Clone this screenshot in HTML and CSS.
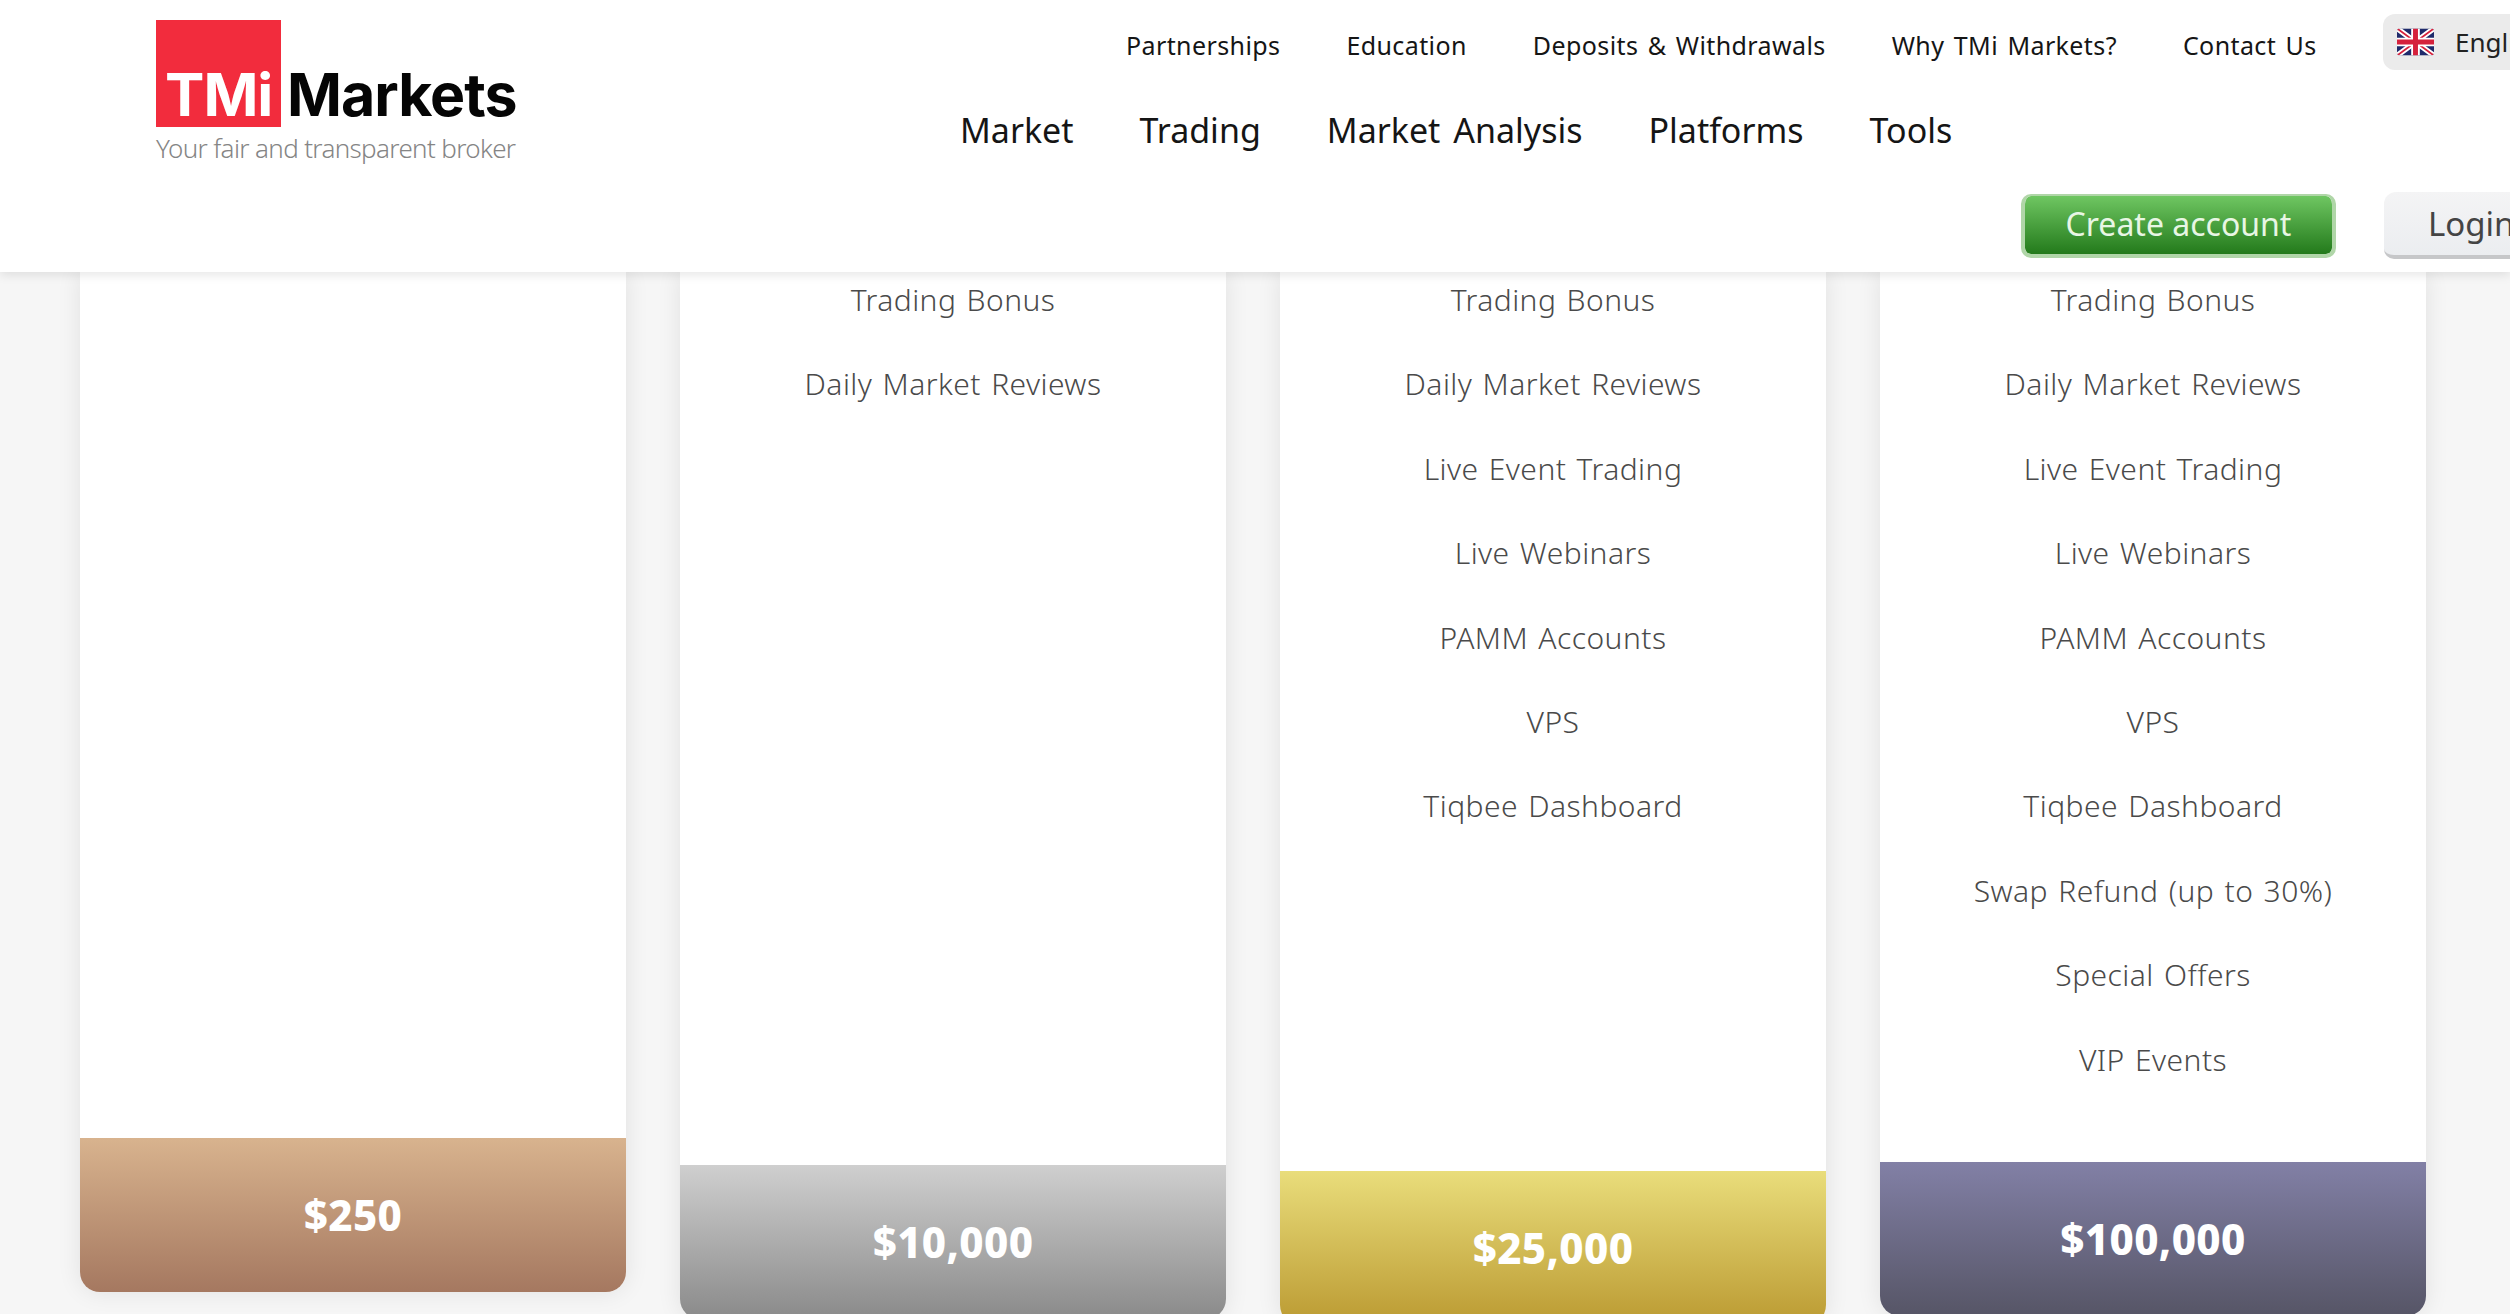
FILE: index.html
```html
<!DOCTYPE html>
<html lang="en">
<head>
<meta charset="utf-8">
<title>TMi Markets</title>
<link rel="stylesheet" href="styles.css">
</head>
<body>
<div class="page">
  <header class="site-header">
    <a class="logo">
      <span class="logo-row"><span class="logo-box">TMi</span><span class="logo-word">Markets</span></span>
      <span class="logo-tag">Your fair and transparent broker</span>
    </a>
    <div class="header-main">
      <div class="top-row">
        <nav class="top-nav">
          <a>Partnerships</a><a>Education</a><a>Deposits &amp; Withdrawals</a><a>Why TMi Markets?</a><a>Contact Us</a>
        </nav>
        <div class="lang">
          <svg class="flag" viewBox="0 0 60 44" aria-hidden="true">
            <defs><clipPath id="flagclip"><rect width="60" height="44" rx="4"/></clipPath></defs>
            <g clip-path="url(#flagclip)">
              <rect width="60" height="44" fill="#1f2a6b"/>
              <path d="M0 0L60 44M60 0L0 44" stroke="#fff" stroke-width="9"/>
              <path d="M0 0L60 44M60 0L0 44" stroke="#d5213c" stroke-width="3"/>
              <path d="M30 0V44M0 22H60" stroke="#fff" stroke-width="14"/>
              <path d="M30 0V44M0 22H60" stroke="#d5213c" stroke-width="8"/>
            </g>
          </svg>
          <span>English</span>
        </div>
      </div>
      <nav class="main-nav">
        <a>Market</a><a>Trading</a><a>Market Analysis</a><a>Platforms</a><a>Tools</a>
      </nav>
      <div class="actions">
        <a class="btn-create">Create account</a>
        <a class="btn-login">Login</a>
      </div>
    </div>
  </header>
  <main class="plans">
    <section class="card card-bronze">
      <div class="card-body"></div>
      <div class="price">$250</div>
    </section>
    <section class="card card-silver">
      <ul class="card-body">
        <li>Trading Bonus</li>
        <li>Daily Market Reviews</li>
      </ul>
      <div class="price">$10,000</div>
    </section>
    <section class="card card-gold">
      <ul class="card-body">
        <li>Trading Bonus</li>
        <li>Daily Market Reviews</li>
        <li>Live Event Trading</li>
        <li>Live Webinars</li>
        <li>PAMM Accounts</li>
        <li>VPS</li>
        <li>Tiqbee Dashboard</li>
      </ul>
      <div class="price">$25,000</div>
    </section>
    <section class="card card-platinum">
      <ul class="card-body">
        <li>Trading Bonus</li>
        <li>Daily Market Reviews</li>
        <li>Live Event Trading</li>
        <li>Live Webinars</li>
        <li>PAMM Accounts</li>
        <li>VPS</li>
        <li>Tiqbee Dashboard</li>
        <li>Swap Refund (up to 30%)</li>
        <li>Special Offers</li>
        <li>VIP Events</li>
      </ul>
      <div class="price">$100,000</div>
    </section>
  </main>
</div>
</body>
</html>
```
FILE: styles.css
```css
* { box-sizing: border-box; }
html, body { margin: 0; height: 100%; background: #fff; overflow: hidden; }
body { font-family: "Noto Sans", "Open Sans", sans-serif; }
a { color: inherit; text-decoration: none; }

.page { width: 2510px; height: 1314px; overflow: hidden; background: #f6f6f6; display: flex; flex-direction: column; }

.site-header { position: relative; z-index: 2; height: 272px; flex: none; background: #fff; box-shadow: 0 3px 10px rgba(0,0,0,.1); display: flex; }

.logo { width: 804px; flex: none; padding: 20px 0 0 156px; display: flex; flex-direction: column; }
.logo-row { display: flex; align-items: flex-end; }
.logo-box { width: 125px; height: 107px; background: #f22c3d; color: #fff; font: 700 59px/1 "Inter", sans-serif; letter-spacing: -1px; padding: 0 0 3px 9px; display: flex; align-items: flex-end; }
.logo-word { font: 700 59px/1 "Inter", sans-serif; color: #050505; letter-spacing: -1px; margin: 0 0 3px 6px; }
.logo-tag { font-size: 26px; font-weight: 300; letter-spacing: -.65px; line-height: 36px; color: #858585; margin-top: 3px; }

.header-main { width: 1706px; flex: none; display: flex; flex-direction: column; }
.top-row { height: 70px; padding-top: 14px; display: flex; align-items: stretch; }
.top-nav { margin-left: 322px; width: 1257px; flex: none; display: flex; gap: 66px; font-size: 25px; letter-spacing: .4px; word-spacing: 2.5px; line-height: 62px; color: #151515; white-space: nowrap; }
.lang { width: 200px; flex: none; background: #ebebeb; border-radius: 12px 0 0 12px; display: flex; align-items: center; gap: 21px; padding-left: 14px; font-size: 26px; color: #222; }
.flag { width: 37px; height: 28px; flex: none; }

.main-nav { margin: 33px 0 0 156px; height: 54px; display: flex; gap: 66px; align-items: center; font-size: 34px; word-spacing: 4px; color: #151515; white-space: nowrap; }

.actions { margin-top: 35px; display: flex; align-items: flex-start; padding-left: 1217px; }
.btn-create { width: 315px; height: 64px; flex: none; margin-top: 2px; border: 4px solid #b0d6a8; border-top-width: 2px; border-radius: 10px; background: linear-gradient(#6fc662, #237a1b); background-clip: padding-box; color: #e8f6e4; font-size: 32px; line-height: 56px; text-align: center; }
.btn-login { margin-left: 48px; width: 200px; height: 67px; flex: none; border-bottom: 4px solid #c6c7c9; border-radius: 12px 0 0 10px; background: linear-gradient(#f4f4f5, #ebedf0); color: #444; font-size: 33px; line-height: 64px; padding-left: 44px; white-space: nowrap; }

.plans { flex: 1; min-height: 0; display: flex; gap: 54px; padding-left: 80px; align-items: flex-start; }
.card { width: 546px; flex: none; background: #fff; border-radius: 0 0 20px 20px; box-shadow: 0 0 24px rgba(0,0,0,.09); display: flex; flex-direction: column; }
.card-body { margin: 0; padding: 0; list-style: none; font-size: 30px; font-weight: 300; letter-spacing: .45px; word-spacing: 2px; color: #4a4a4a; text-align: center; white-space: nowrap; overflow: hidden; }
.card-body li { height: 84.4px; line-height: 84.4px; margin-top: 0; }
.card-body li:first-child { margin-top: -14px; }

.card-bronze .card-body { height: 866px; }
.card-silver .card-body { height: 893px; }
.card-gold .card-body { height: 899px; }
.card-platinum .card-body { height: 890px; }

.price { height: 154px; flex: none; border-radius: 0 0 20px 20px; padding-bottom: 1px; display: flex; align-items: center; justify-content: center; color: #fff; font-size: 42px; font-weight: 800; letter-spacing: .4px; }
.card-bronze .price { background: linear-gradient(#d8b38e, #a57860); }
.card-silver .price { background: linear-gradient(#cfcfcf, #8a8a8a); }
.card-gold .price { background: linear-gradient(#e9dd7b, #bb9a32); }
.card-platinum .price { background: linear-gradient(#8280a6, #565566); }
```
